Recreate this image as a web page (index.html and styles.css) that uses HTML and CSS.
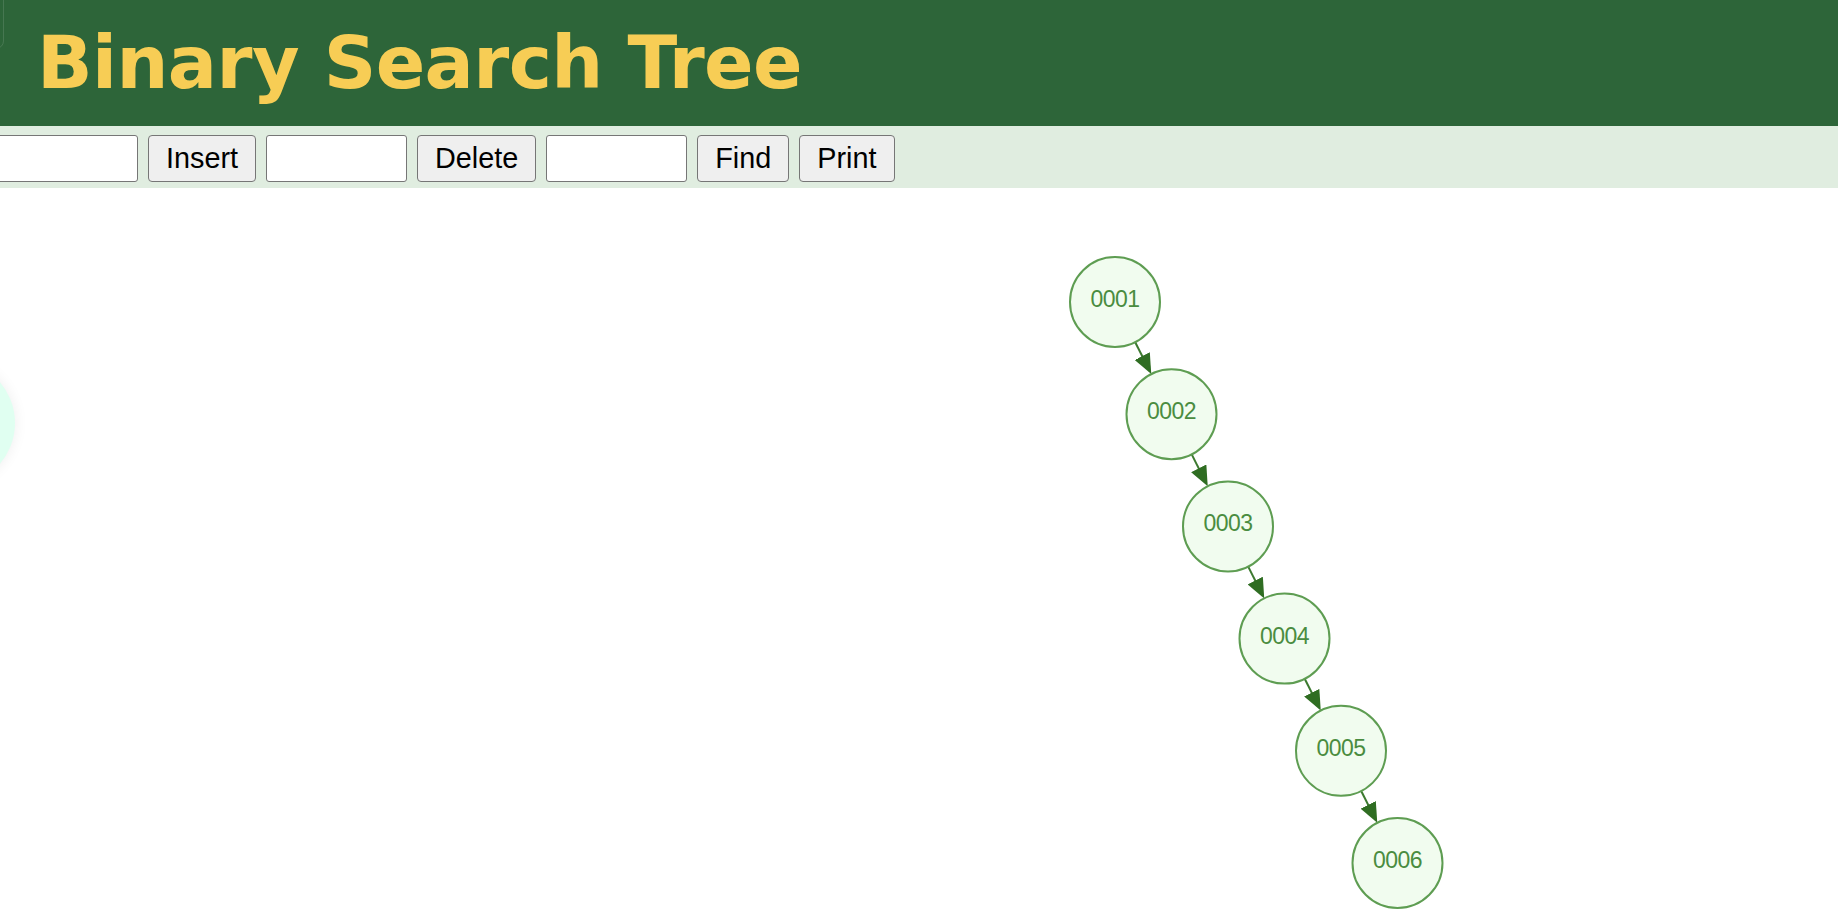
FILE: index.html
```html
<!DOCTYPE html>
<html>
<head>
<meta charset="utf-8">
<title>Binary Search Tree</title>
<link rel="stylesheet" href="styles.css">
</head>
<body>
<header class="header">
  <div class="edge-ghost"></div>
  <h1 class="title">Binary Search Tree</h1>
</header>
<div class="toolbar">
  <input class="field first" type="text">
  <button class="btn">Insert</button>
  <input class="field" type="text">
  <button class="btn">Delete</button>
  <input class="field" type="text">
  <button class="btn">Find</button>
  <button class="btn">Print</button>
</div>
<main class="canvas">
  <div class="blob"></div>
  <svg class="tree" width="1838" height="732" viewBox="0 0 1838 732" xmlns="http://www.w3.org/2000/svg">
    <defs>
      <marker id="arr" viewBox="0 0 20 17" refX="17" refY="8.5" markerWidth="20" markerHeight="17" markerUnits="userSpaceOnUse" orient="auto">
        <path d="M0,0 L20,8.5 L0,17 z" fill="#2f6d22"/>
      </marker>
    </defs>
    <g class="edges" stroke="#3d7a30" stroke-width="2" marker-end="url(#arr)">
      <line x1="1135.2" y1="154.2" x2="1149.9" y2="183.3"/>
      <line x1="1191.7" y1="266.4" x2="1206.4" y2="295.5"/>
      <line x1="1248.2" y1="378.6" x2="1262.9" y2="407.7"/>
      <line x1="1304.7" y1="490.8" x2="1319.4" y2="519.9"/>
      <line x1="1361.2" y1="603" x2="1375.9" y2="632.1"/>
    </g>
    <g class="nodes" fill="#f1fcef" stroke="#5e9d52" stroke-width="2">
      <circle cx="1115" cy="114" r="45"/>
      <circle cx="1171.5" cy="226.2" r="45"/>
      <circle cx="1228" cy="338.4" r="45"/>
      <circle cx="1284.5" cy="450.6" r="45"/>
      <circle cx="1341" cy="562.8" r="45"/>
      <circle cx="1397.5" cy="675" r="45"/>
    </g>
    <g class="labels" fill="#4a8c40" text-anchor="middle">
      <text x="1115" y="119">0001</text>
      <text x="1171.5" y="231.2">0002</text>
      <text x="1228" y="343.4">0003</text>
      <text x="1284.5" y="455.6">0004</text>
      <text x="1341" y="567.8">0005</text>
      <text x="1397.5" y="680">0006</text>
    </g>
  </svg>
</main>
</body>
</html>
```
FILE: styles.css
```css
html, body {
  margin: 0;
  padding: 0;
}
body {
  width: 1838px;
  height: 920px;
  overflow: hidden;
  background: #ffffff;
  font-family: "Liberation Sans", Arial, sans-serif;
}
.header {
  position: relative;
  height: 126px;
  background: #2d6539;
  box-sizing: border-box;
  padding-left: 37px;
}
.edge-ghost {
  position: absolute;
  left: -20px;
  top: -10px;
  width: 22px;
  height: 57px;
  border: 1px solid rgba(255, 255, 255, 0.12);
  border-radius: 8px;
}
.title {
  margin: 0;
  font-family: "DejaVu Sans", Verdana, sans-serif;
  font-weight: bold;
  font-size: 73px;
  letter-spacing: -0.6px;
  line-height: 126px;
  color: #f7cd55;
  white-space: nowrap;
}
.toolbar {
  height: 62px;
  box-sizing: border-box;
  background: #e0ede0;
  display: flex;
  align-items: flex-start;
  gap: 10px;
  padding-top: 9px;
}
.field {
  width: 141px;
  height: 47px;
  box-sizing: border-box;
  margin: 0;
  border: 1px solid #767676;
  border-radius: 3px;
  background: #ffffff;
  padding: 0 4px;
  font-family: "Liberation Sans", Arial, sans-serif;
  font-size: 28.8px;
}
.field.first {
  margin-left: -3px;
}
.btn {
  height: 47px;
  box-sizing: border-box;
  margin: 0;
  padding: 0 17px;
  border: 1px solid #767676;
  border-radius: 4px;
  background: #efefef;
  color: #000000;
  font-family: "Liberation Sans", Arial, sans-serif;
  font-size: 28.8px;
  line-height: 1;
}
.canvas {
  position: relative;
  height: 732px;
  overflow: hidden;
}
.blob {
  position: absolute;
  left: -111px;
  top: 172px;
  width: 126px;
  height: 126px;
  border-radius: 50%;
  background: #e0fff1;
  box-shadow: 0 0 14px rgba(0, 0, 0, 0.07);
}
.tree {
  position: absolute;
  left: 0;
  top: 0;
}
.labels text {
  font-family: "Liberation Sans", Arial, sans-serif;
  font-size: 23px;
  letter-spacing: -0.6px;
}
```
